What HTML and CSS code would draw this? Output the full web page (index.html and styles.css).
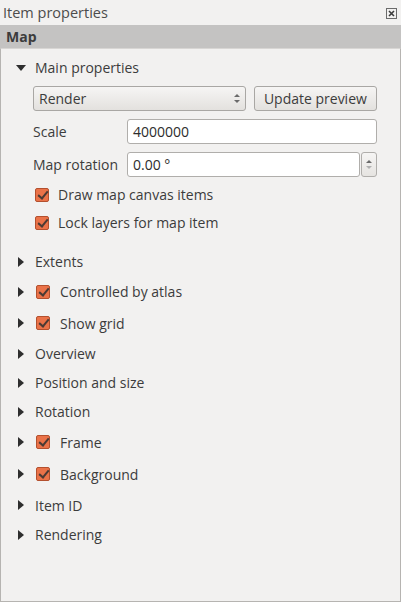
FILE: index.html
```html
<!DOCTYPE html>
<html>
<head>
<meta charset="utf-8">
<link rel="stylesheet" href="styles.css">
</head>
<body>
<div class="dock">
  <div class="titlebar">
    <span class="title">Item properties</span>
    <svg class="close" width="11" height="11" viewBox="0 0 11 11">
      <rect x="0.5" y="0.5" width="10" height="10" fill="none" stroke="#6b6b6b"/>
      <path d="M3 3 L8 8 M8 3 L3 8" stroke="#3c3c3c" stroke-width="1.6"/>
    </svg>
  </div>
  <div class="header">Map</div>
  <div class="panel">
    <div class="group open">
      <div class="row head">
        <span class="arrow down"></span>
        <span class="label">Main properties</span>
      </div>
      <div class="content">
        <div class="line">
          <div class="combo"><span>Render</span><span class="spin-ind"><i class="up"></i><i class="dn"></i></span></div>
          <button class="btn">Update preview</button>
        </div>
        <div class="line">
          <span class="flabel">Scale</span>
          <div class="input wide">4000000</div>
        </div>
        <div class="line last">
          <span class="flabel">Map rotation</span>
          <div class="input spinput">0.00 °</div>
          <div class="spinbtn"><i class="up"></i><i class="dn"></i></div>
        </div>
        <div class="check-line"><span class="cb"></span><span>Draw map canvas items</span></div>
        <div class="check-line"><span class="cb"></span><span>Lock layers for map item</span></div>
      </div>
    </div>
    <div class="list">
      <div class="row item h29"><span class="arrow"></span><span class="label">Extents</span></div>
      <div class="row item h31"><span class="arrow"></span><span class="cb"></span><span class="label cl">Controlled by atlas</span></div>
      <div class="row item h32"><span class="arrow"></span><span class="cb"></span><span class="label cl">Show grid</span></div>
      <div class="row item h29"><span class="arrow"></span><span class="label">Overview</span></div>
      <div class="row item h29"><span class="arrow"></span><span class="label">Position and size</span></div>
      <div class="row item h29"><span class="arrow"></span><span class="label">Rotation</span></div>
      <div class="row item h32"><span class="arrow"></span><span class="cb"></span><span class="label cl">Frame</span></div>
      <div class="row item h32"><span class="arrow"></span><span class="cb"></span><span class="label cl">Background</span></div>
      <div class="row item h30"><span class="arrow"></span><span class="label">Item ID</span></div>
      <div class="row item h29"><span class="arrow"></span><span class="label">Rendering</span></div>
    </div>
  </div>
</div>
</body>
</html>
```
FILE: styles.css
```css
* { box-sizing: border-box; }
html, body { margin: 0; padding: 0; }
body {
  width: 401px;
  height: 602px;
  background: #f2f1f0;
  font-family: "Open Sans", "DejaVu Sans", sans-serif;
  font-size: 14px;
  color: #3c3c3c;
  overflow: hidden;
}
.dock { display: flex; flex-direction: column; height: 602px; }
.titlebar {
  height: 25px;
  flex: none;
  display: flex;
  align-items: center;
  justify-content: space-between;
  padding: 0 4px 0 3px;
  font-size: 14.5px;
  color: #4c4c4c;
}
.close { display: block; margin-top: 2px; }
.header {
  height: 23px;
  flex: none;
  background: #c4c3c2;
  font-weight: bold;
  padding-left: 6px;
  display: flex;
  align-items: center;
  color: #3c3c3c;
}
.panel {
  flex: 1;
  border: 1px solid #b6b4b1;
  border-top: 1px solid #d8d6d4;
  padding: 6px 0 0 0;
}
.row {
  display: flex;
  align-items: center;
  padding-left: 15px;
}
.head { height: 24px; }
.arrow {
  width: 0; height: 0;
  border-top: 5px solid transparent;
  border-bottom: 5px solid transparent;
  border-left: 6px solid #2e2e2e;
  margin-left: 2px;
  margin-right: 11px;
  flex: none;
}
.arrow.down {
  border-left: 5px solid transparent;
  border-right: 5px solid transparent;
  border-top: 6px solid #2e2e2e;
  border-bottom: 0;
  margin-left: 0;
  margin-right: 9px;
  margin-top: 1px;
}
.content { padding: 7px 23px 0 32px; }
.line { display: flex; align-items: center; margin-bottom: 8px; }
.line.last { margin-bottom: 3px; }
.combo {
  width: 214px;
  height: 25px;
  border: 1px solid #a9a7a4;
  border-radius: 3px;
  background: linear-gradient(#f6f5f4, #e3e1de);
  display: flex;
  align-items: center;
  justify-content: space-between;
  padding: 0 5px 0 5px;
}
.spin-ind, .spinbtn { display: flex; flex-direction: column; align-items: center; gap: 3px; }
.spin-ind i, .spinbtn i { display: block; width: 0; height: 0; border-left: 3px solid transparent; border-right: 3px solid transparent; }
.spin-ind i.up, .spinbtn i.up { border-bottom: 3px solid #6a6a6a; }
.spin-ind i.dn, .spinbtn i.dn { border-top: 3px solid #6a6a6a; }
.spinbtn i.dn { border-top-color: #b0b0b0; }
.btn {
  margin-left: 8px;
  width: 124px;
  height: 25px;
  border: 1px solid #a9a7a4;
  border-radius: 3px;
  background: linear-gradient(#f6f5f4, #e3e1de);
  font-family: inherit;
  font-size: inherit;
  color: #3c3c3c;
  padding: 0;
}
.flabel { width: 94px; flex: none; }
.input {
  height: 25px;
  border: 1px solid #b0aeab;
  border-radius: 3px;
  background: #fff;
  display: flex;
  align-items: center;
  padding-left: 5px;
  color: #2c2c2c;
}
.input.wide { width: 251px; }
.input.spinput { width: 235px; }
.spinbtn {
  width: 16px;
  height: 25px;
  margin-left: 1px;
  border: 1px solid #b0aeab;
  border-radius: 3px;
  background: linear-gradient(#f6f5f4, #e6e4e1);
  justify-content: center;
}
.check-line { display: flex; align-items: center; height: 28px; padding-left: 2px; }
.check-line .cb { margin-right: 9px; margin-top: 1px; }
.cb {
  width: 14px;
  height: 14px;
  border-radius: 2px;
  background: #ea7248;
  border: 1px solid #b3502e;
  flex: none;
  position: relative;
}
.cb::after {
  content: "";
  position: absolute;
  left: 4px;
  top: 0px;
  width: 4px;
  height: 8px;
  border-right: 2px solid #4a3a34;
  border-bottom: 2px solid #4a3a34;
  transform: rotate(40deg);
}
.list { padding-top: 11px; }
.h29 { height: 29px; }
.h30 { height: 30px; }
.h31 { height: 31px; }
.h32 { height: 32px; }
.item .cb { margin-left: 1px; }
.label.cl { margin-left: 10px; }
```
